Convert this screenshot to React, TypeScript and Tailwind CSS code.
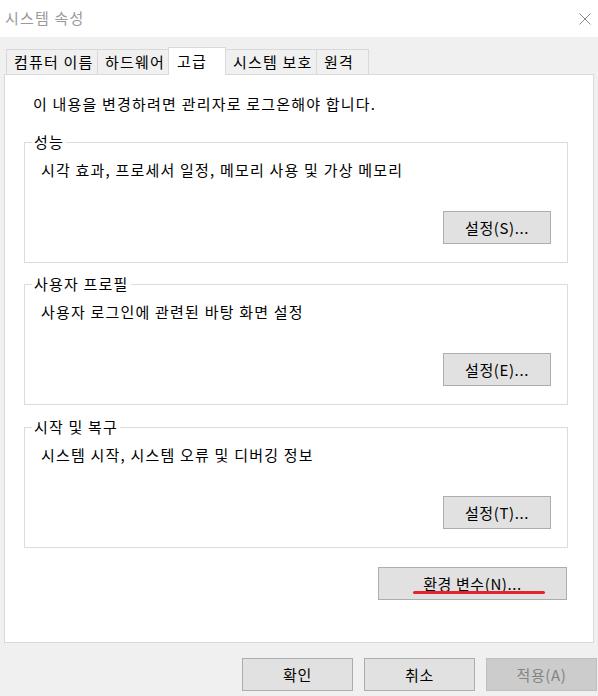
const font = { fontFamily: '"Noto Sans CJK KR", "Noto Sans", sans-serif' };

interface GroupProps {
  title: string;
  description: string;
  button: string;
  className?: string;
}

const tabs = [
  { label: "컴퓨터 이름", width: "w-[92px]" },
  { label: "하드웨어", width: "w-[72px]" },
  { label: "고급", width: "w-[58px]", active: true },
  { label: "시스템 보호", width: "w-[92px]" },
  { label: "원격", width: "w-[53px]" },
];

const WinButton = ({ label, className = "" }: { label: string; className?: string }) => (
  <button
    className={`h-[33px] border border-[#adadad] bg-[#e1e1e1] text-[15px] leading-none tracking-[0.6px] text-black ${className}`}
  >
    {label}
  </button>
);

const GroupBox = ({ title, description, button, className = "" }: GroupProps) => (
  <fieldset className={`ml-[19px] mr-[25px] border border-[#dcdcdc] pb-[18px] ${className}`}>
    <legend className="ml-[7px] px-[2px] text-[15px] leading-[20px]">{title}</legend>
    <div className="mt-[8px] pl-[16px] text-[15px] leading-[20px]">{description}</div>
    <div className="mt-[31px] flex justify-end pr-[16px]">
      <WinButton label={button} className="w-[108px]" />
    </div>
  </fieldset>
);

export default function App() {
  return (
    <div className="flex h-[696px] w-[598px] flex-col bg-[#f0f0f0] tracking-[1.2px] text-black" style={font}>
      <div className="flex h-[37px] items-center justify-between bg-white pl-[5px] pr-[7px]">
        <span className="text-[15px] text-[#9a9a9a]">시스템 속성</span>
        <svg width="12" height="12" viewBox="0 0 12 12">
          <path d="M0.5 0.5 L11.5 11.5 M11.5 0.5 L0.5 11.5" stroke="#8a8a8a" strokeWidth="1" />
        </svg>
      </div>

      <div className="relative z-10 -mb-px mt-[10px] flex h-[28px] items-end pl-[6px]">
        {tabs.map((tab, i) =>
          tab.active ? (
            <div
              key={tab.label}
              className={`${tab.width} -ml-px h-[28px] border border-b-0 border-[#d9d9d9] bg-white pl-[8px] pt-[3px] text-[15px] leading-[20px]`}
            >
              {tab.label}
            </div>
          ) : (
            <div
              key={tab.label}
              className={`${tab.width} ${i === 0 ? "" : "-ml-px"} mb-px h-[25px] border border-b-0 border-[#d9d9d9] bg-[#f0f0f0] pl-[7px] pt-[2px] text-[15px] leading-[20px]`}
            >
              {tab.label}
            </div>
          )
        )}
      </div>

      <div className="mx-[4px] h-[569px] border border-[#d9d9d9] bg-white pt-[19px]">
        <div className="pl-[28px] text-[15px] leading-[20px]">이 내용을 변경하려면 관리자로 로그온해야 합니다.</div>

        <GroupBox
          className="mt-[18px]"
          title="성능"
          description="시각 효과, 프로세서 일정, 메모리 사용 및 가상 메모리"
          button="설정(S)..."
        />
        <GroupBox
          className="mt-[11px]"
          title="사용자 프로필"
          description="사용자 로그인에 관련된 바탕 화면 설정"
          button="설정(E)..."
        />
        <GroupBox
          className="mt-[12px]"
          title="시작 및 복구"
          description="시스템 시작, 시스템 오류 및 디버깅 정보"
          button="설정(T)..."
        />

        <div className="mt-[19px] flex justify-end pr-[26px]">
          <div className="relative">
            <WinButton label="환경 변수(N)..." className="w-[189px]" />
            <span className="absolute left-[35px] top-[24px] h-[3px] w-[132px] rounded-full bg-[#e3242b]" />
          </div>
        </div>
      </div>

      <div className="mt-[15px] flex justify-end gap-[11px] pr-[1px]">
        <WinButton label="확인" className="w-[111px]" />
        <WinButton label="취소" className="w-[111px]" />
        <button className="h-[33px] w-[111px] border border-[#bfbfbf] bg-[#cccccc] text-[15px] leading-none tracking-[0.6px] text-[#838383]">
          적용(A)
        </button>
      </div>
    </div>
  );
}
